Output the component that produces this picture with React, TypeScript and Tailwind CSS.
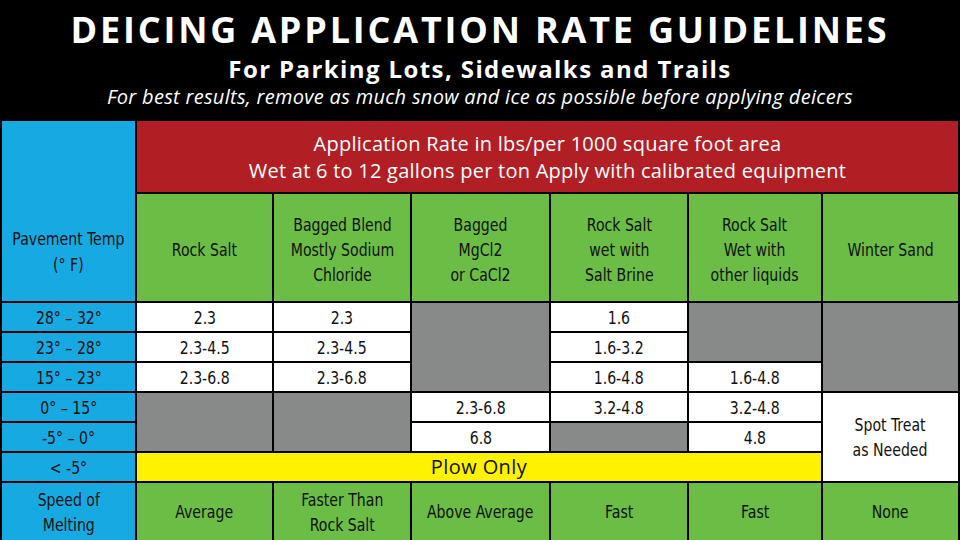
import React from "react";

const cond = "font-['DejaVu_Sans_Condensed','Liberation_Sans_Narrow',Roboto,sans-serif]";
const reg = "font-['Open_Sans','Liberation_Sans',sans-serif]";

function Cell({ className, children }: { className: string; children?: React.ReactNode }) {
  return (
    <div className={`flex items-center justify-center text-center ${className}`}>
      {children !== undefined && <span className="inline-block scale-x-[0.87] whitespace-nowrap">{children}</span>}
    </div>
  );
}

export default function App() {
  const blue = "bg-[#17a9e2] text-[#111] text-[18px] leading-[25px]";
  const green = "bg-[#6bbd45] text-[#111] text-[18px] leading-[25px]";
  const white = "bg-white text-[#111] text-[18px]";
  const gray = "bg-[#878a89]";
  return (
    <div className="w-[960px] h-[540px] bg-black overflow-hidden">
      <div className={`h-[119px] flex flex-col items-center text-white ${reg}`}>
        <div className="text-[36px] font-bold leading-[40px] h-[40px] mt-[10px] tracking-[2.8px]">DEICING APPLICATION RATE GUIDELINES</div>
        <div className="text-[24px] font-bold leading-[24px] h-[24px] mt-[7px] tracking-[1.4px]">For Parking Lots, Sidewalks and Trails</div>
        <div className="text-[20px] italic leading-[20px] h-[20px] mt-[6px] tracking-[0.3px]">For best results, remove as much snow and ice as possible before applying deicers</div>
      </div>
      <div
        className={`grid grid-cols-[133px_135px_136px_137px_136px_132px_135px] grid-rows-[71px_107px_28px_28px_28px_28px_28px_28px_57px] gap-[2px] pt-[2px] pl-[2px] ${cond}`}
      >
        <Cell className={`${blue} leading-[26px] col-start-1 row-start-1 row-span-2 pt-[82px]`}>
          Pavement Temp<br />(° F)
        </Cell>
        <div className={`flex items-center justify-center text-center bg-[#b11f24] text-white text-[20px] leading-[27px] tracking-[0.25px] col-start-2 col-span-6 row-start-1 ${reg}`}>
          <span>Application Rate in lbs/per 1000 square foot area<br />Wet at 6 to 12 gallons per ton Apply with calibrated equipment</span>
        </div>
        <Cell className={`${green} pt-[4px] col-start-2 row-start-2`}>Rock Salt</Cell>
        <Cell className={`${green} pt-[4px] col-start-3 row-start-2`}>Bagged Blend<br />Mostly Sodium<br />Chloride</Cell>
        <Cell className={`${green} pt-[4px] col-start-4 row-start-2`}>Bagged<br />MgCl2<br />or CaCl2</Cell>
        <Cell className={`${green} pt-[4px] col-start-5 row-start-2`}>Rock Salt<br />wet with<br />Salt Brine</Cell>
        <Cell className={`${green} pt-[4px] col-start-6 row-start-2`}>Rock Salt<br />Wet with<br />other liquids</Cell>
        <Cell className={`${green} pt-[4px] col-start-7 row-start-2`}>Winter Sand</Cell>

        <Cell className={`${blue} col-start-1 row-start-3`}>28° – 32°</Cell>
        <Cell className={`${blue} col-start-1 row-start-4`}>23° – 28°</Cell>
        <Cell className={`${blue} col-start-1 row-start-5`}>15° – 23°</Cell>
        <Cell className={`${blue} col-start-1 row-start-6`}>0° – 15°</Cell>
        <Cell className={`${blue} col-start-1 row-start-7`}>-5° – 0°</Cell>
        <Cell className={`${blue} col-start-1 row-start-8`}>&lt; -5°</Cell>
        <Cell className={`${blue} col-start-1 row-start-9`}>Speed of<br />Melting</Cell>

        <Cell className={`${white} col-start-2 row-start-3`}>2.3</Cell>
        <Cell className={`${white} col-start-2 row-start-4`}>2.3-4.5</Cell>
        <Cell className={`${white} col-start-2 row-start-5`}>2.3-6.8</Cell>
        <Cell className={`${gray} col-start-2 row-start-6 row-span-2`} />

        <Cell className={`${white} col-start-3 row-start-3`}>2.3</Cell>
        <Cell className={`${white} col-start-3 row-start-4`}>2.3-4.5</Cell>
        <Cell className={`${white} col-start-3 row-start-5`}>2.3-6.8</Cell>
        <Cell className={`${gray} col-start-3 row-start-6 row-span-2`} />

        <Cell className={`${gray} col-start-4 row-start-3 row-span-3`} />
        <Cell className={`${white} col-start-4 row-start-6`}>2.3-6.8</Cell>
        <Cell className={`${white} col-start-4 row-start-7`}>6.8</Cell>

        <Cell className={`${white} col-start-5 row-start-3`}>1.6</Cell>
        <Cell className={`${white} col-start-5 row-start-4`}>1.6-3.2</Cell>
        <Cell className={`${white} col-start-5 row-start-5`}>1.6-4.8</Cell>
        <Cell className={`${white} col-start-5 row-start-6`}>3.2-4.8</Cell>
        <Cell className={`${gray} col-start-5 row-start-7`} />

        <Cell className={`${gray} col-start-6 row-start-3 row-span-2`} />
        <Cell className={`${white} col-start-6 row-start-5`}>1.6-4.8</Cell>
        <Cell className={`${white} col-start-6 row-start-6`}>3.2-4.8</Cell>
        <Cell className={`${white} col-start-6 row-start-7`}>4.8</Cell>

        <Cell className={`${gray} col-start-7 row-start-3 row-span-3`} />
        <Cell className={`${white} leading-[25px] col-start-7 row-start-6 row-span-3`}>Spot Treat<br />as Needed</Cell>

        <div className={`flex items-center justify-center bg-[#fff200] text-[#111] text-[20px] tracking-[0.4px] col-start-2 col-span-5 row-start-8 ${reg}`}>Plow Only</div>

        <Cell className={`${green} col-start-2 row-start-9`}>Average</Cell>
        <Cell className={`${green} col-start-3 row-start-9`}>Faster Than<br />Rock Salt</Cell>
        <Cell className={`${green} col-start-4 row-start-9`}>Above Average</Cell>
        <Cell className={`${green} col-start-5 row-start-9`}>Fast</Cell>
        <Cell className={`${green} col-start-6 row-start-9`}>Fast</Cell>
        <Cell className={`${green} col-start-7 row-start-9`}>None</Cell>
      </div>
    </div>
  );
}
